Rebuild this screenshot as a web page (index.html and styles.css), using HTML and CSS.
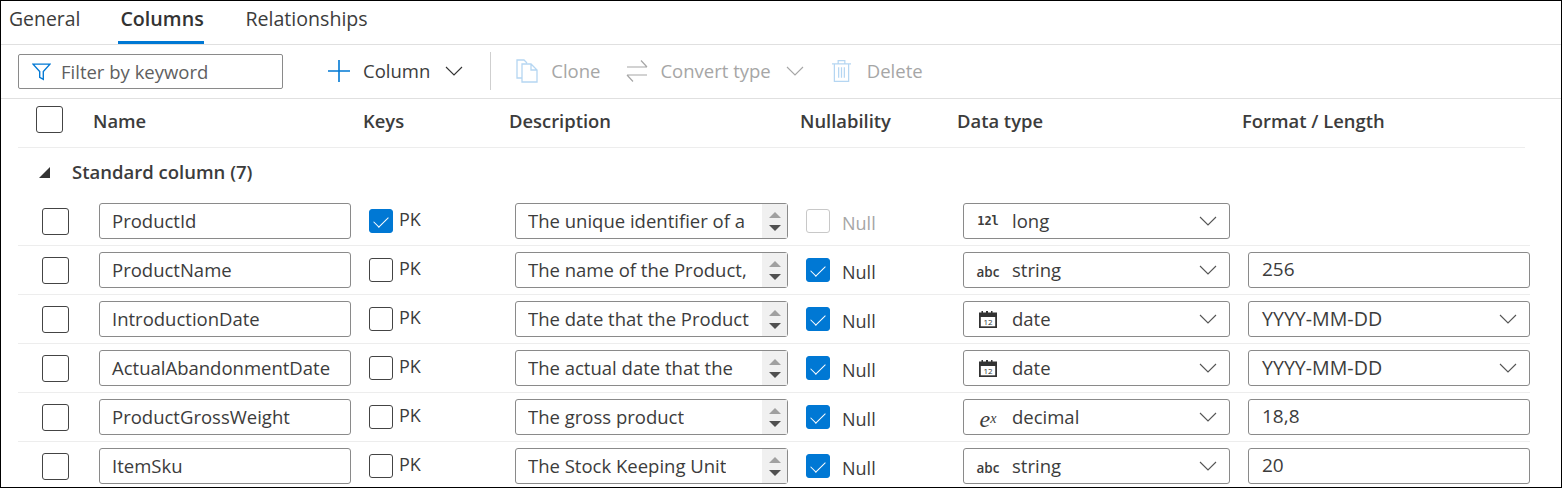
FILE: index.html
```html
<!DOCTYPE html>
<html lang="en">
<head>
    <meta charset="UTF-8">
    <title>Columns</title>
    <link rel="stylesheet" href="styles.css">
</head>
<body>
    <div class="frame">
        <nav class="tabs">
            <a class="tab">General</a>
            <a class="tab tab-active">Columns</a>
            <a class="tab">Relationships</a>
        </nav>

        <div class="toolbar">
            <div class="filter">
                <svg class="filter-icon" viewBox="0 0 18 18"><path d="M1 2h16l-6.300 7v7.500l-3.400-2V9z" fill="none" stroke="#0078d4" stroke-width="1.300"/></svg>
                <span>Filter by keyword</span>
            </div>
            <button class="tool tool-column">
                <svg class="plus-icon" viewBox="0 0 24 24"><path d="M12 1v22M1 12h22" stroke="#0078d4" stroke-width="1.600"/></svg>
                <span>Column</span>
                <svg class="chev chev-dark" viewBox="0 0 18 10"><path d="M1 1l8 8 8-8"/></svg>
            </button>
            <div class="divider"></div>
            <button class="tool tool-off tool-clone">
                <svg class="clone-icon" viewBox="0 0 22 24"><path d="M6 19H1V1h7l3 3M6 5h9l6 6v12H6zM15 5v6h6" fill="#fff" stroke="#b5d6f2" stroke-width="1.300"/></svg>
                <span>Clone</span>
            </button>
            <button class="tool tool-off tool-convert">
                <svg class="convert-icon" viewBox="0 0 22 24"><path d="M1 8h20M15 1.500L21 8M1 16h20M7 22.500L1 16" fill="none" stroke="#a6a6a6" stroke-width="1.200"/></svg>
                <span>Convert type</span>
                <svg class="chev chev-off" viewBox="0 0 18 10"><path d="M1 1l8 8 8-8"/></svg>
            </button>
            <button class="tool tool-off tool-delete">
                <svg class="trash-icon" viewBox="0 0 20 24"><path d="M0 4.500h20M6.500 4.500V1.200h7v3.300M2.500 4.500V23h15V4.500M7 8v11M10 8v11M13 8v11" fill="none" stroke="#b5d6f2" stroke-width="1.300"/></svg>
                <span>Delete</span>
            </button>
        </div>

        <div class="head grid">
            <div><span class="check head-check"></span></div>
            <div>Name</div>
            <div>Keys</div>
            <div>Description</div>
            <div>Nullability</div>
            <div>Data type</div>
            <div>Format / Length</div>
        </div>

        <div class="group"><span class="caret"></span>Standard column (7)</div>

        <div class="row grid">
            <div><span class="check"></span></div>
            <div class="field name">ProductId</div>
            <div class="key"><span class="check small on"></span><span class="key-label">PK</span></div>
            <div class="field desc"><span class="clip">The unique identifier of a</span><span class="spin"><i class="up"></i><i class="down"></i></span></div>
            <div class="null off"><span class="check small"></span><span class="null-label">Null</span></div>
            <div class="field type"><span class="glyph glyph-num">12l</span>long<svg class="chev" viewBox="0 0 18 10"><path d="M1 1l8 8 8-8"/></svg></div>
            <div></div>
        </div>
        <div class="row grid">
            <div><span class="check"></span></div>
            <div class="field name">ProductName</div>
            <div class="key"><span class="check small"></span><span class="key-label">PK</span></div>
            <div class="field desc"><span class="clip">The name of the Product,</span><span class="spin"><i class="up"></i><i class="down"></i></span></div>
            <div class="null"><span class="check small on"></span><span class="null-label">Null</span></div>
            <div class="field type"><span class="glyph glyph-abc">abc</span>string<svg class="chev" viewBox="0 0 18 10"><path d="M1 1l8 8 8-8"/></svg></div>
            <div class="field format">256</div>
        </div>
        <div class="row grid">
            <div><span class="check"></span></div>
            <div class="field name">IntroductionDate</div>
            <div class="key"><span class="check small"></span><span class="key-label">PK</span></div>
            <div class="field desc"><span class="clip">The date that the Product</span><span class="spin"><i class="up"></i><i class="down"></i></span></div>
            <div class="null"><span class="check small on"></span><span class="null-label">Null</span></div>
            <div class="field type"><span class="glyph"><svg class="cal" viewBox="0 0 18 18"><path d="M0 2.500h2.500V1h1.500v1.500h3V1h2v1.500h3V1h1.500v1.500H18V18H0z"/><rect x="1.800" y="7" width="14.400" height="9.300" fill="#fff"/><text x="9" y="15" class="cal-day">12</text></svg></span>date<svg class="chev" viewBox="0 0 18 10"><path d="M1 1l8 8 8-8"/></svg></div>
            <div class="field format format-date">YYYY-MM-DD<svg class="chev" viewBox="0 0 18 10"><path d="M1 1l8 8 8-8"/></svg></div>
        </div>
        <div class="row grid">
            <div><span class="check"></span></div>
            <div class="field name">ActualAbandonmentDate</div>
            <div class="key"><span class="check small"></span><span class="key-label">PK</span></div>
            <div class="field desc"><span class="clip">The actual date that the</span><span class="spin"><i class="up"></i><i class="down"></i></span></div>
            <div class="null"><span class="check small on"></span><span class="null-label">Null</span></div>
            <div class="field type"><span class="glyph"><svg class="cal" viewBox="0 0 18 18"><path d="M0 2.500h2.500V1h1.500v1.500h3V1h2v1.500h3V1h1.500v1.500H18V18H0z"/><rect x="1.800" y="7" width="14.400" height="9.300" fill="#fff"/><text x="9" y="15" class="cal-day">12</text></svg></span>date<svg class="chev" viewBox="0 0 18 10"><path d="M1 1l8 8 8-8"/></svg></div>
            <div class="field format format-date">YYYY-MM-DD<svg class="chev" viewBox="0 0 18 10"><path d="M1 1l8 8 8-8"/></svg></div>
        </div>
        <div class="row grid">
            <div><span class="check"></span></div>
            <div class="field name">ProductGrossWeight</div>
            <div class="key"><span class="check small"></span><span class="key-label">PK</span></div>
            <div class="field desc"><span class="clip">The gross product</span><span class="spin"><i class="up"></i><i class="down"></i></span></div>
            <div class="null"><span class="check small on"></span><span class="null-label">Null</span></div>
            <div class="field type"><span class="glyph glyph-exp">e<sup>x</sup></span>decimal<svg class="chev" viewBox="0 0 18 10"><path d="M1 1l8 8 8-8"/></svg></div>
            <div class="field format">18,8</div>
        </div>
        <div class="row grid">
            <div><span class="check"></span></div>
            <div class="field name">ItemSku</div>
            <div class="key"><span class="check small"></span><span class="key-label">PK</span></div>
            <div class="field desc"><span class="clip">The Stock Keeping Unit</span><span class="spin"><i class="up"></i><i class="down"></i></span></div>
            <div class="null"><span class="check small on"></span><span class="null-label">Null</span></div>
            <div class="field type"><span class="glyph glyph-abc">abc</span>string<svg class="chev" viewBox="0 0 18 10"><path d="M1 1l8 8 8-8"/></svg></div>
            <div class="field format">20</div>
        </div>
    </div>
</body>
</html>
```

FILE: styles.css
```css
* {
    box-sizing: border-box;
}
body {
    margin: 0;
    font-family: "Open Sans", "Noto Sans", sans-serif;
    font-size: 18.5px;
    color: #3c3c3c;
    background: #fff;
}
.frame {
    width: 1562px;
    height: 488px;
    border: 1px solid #000;
    overflow: hidden;
}

/* tabs */
.tabs {
    display: flex;
    height: 44px;
    border-bottom: 1px solid #e0e0e0;
    padding-left: 8px;
    font-size: 19.400px;
}
.tab {
    line-height: 36px;
    height: 43px;
}
.tab:last-child {
    font-size: 19.600px;
    margin-left: 41px;
}
.tab-active {
    font-size: 19.700px;
    font-weight: 600;
    color: #333;
    border-bottom: 3px solid #0078d4;
    padding: 0 2px;
    width: 86px;
    margin-left: 38px;
}

/* toolbar */
.toolbar {
    display: flex;
    align-items: center;
    height: 54px;
    border-bottom: 1px solid #e0e0e0;
    padding-left: 17px;
}
.filter {
    display: flex;
    align-items: center;
    width: 265px;
    height: 35px;
    border: 1px solid #8a8a8a;
    border-radius: 2px;
    padding-left: 13px;
    color: #5f5f5f;
}
.filter-icon {
    width: 19px;
    height: 19px;
    margin-right: 10px;
}
.tool {
    display: flex;
    align-items: center;
    background: none;
    border: none;
    padding: 0 0 2px;
    font: inherit;
    color: #3c3c3c;
}
.tool-off {
    color: #a6a6a6;
}
.tool-column {
    margin-left: 44px;
}
.plus-icon {
    width: 24px;
    height: 24px;
    margin-right: 12px;
}
.divider {
    width: 1px;
    height: 38px;
    background: #cfcfcf;
    margin: 0 0 2px 27px;
}
.tool-clone {
    margin-left: 25px;
}
.clone-icon {
    width: 22px;
    height: 24px;
    margin-right: 13px;
}
.tool-convert {
    margin-left: 26px;
}
.convert-icon {
    width: 22px;
    height: 24px;
    margin-right: 12px;
}
.tool-delete {
    margin-left: 28px;
}
.trash-icon {
    width: 19px;
    height: 24px;
    margin-right: 16px;
}
.chev {
    width: 18px;
    height: 10px;
    color: #555;
    fill: none;
    stroke: currentColor;
    stroke-width: 1.100;
}
.tool .chev {
    margin-left: 15px;
}
.chev-off {
    color: #a6a6a6;
}
.chev-dark {
    color: #333;
}

/* table */
.grid {
    display: grid;
    align-items: center;
}
.head {
    grid-template-columns: 75px 270px 146px 291px 157px 285px 1fr;
    height: 49px;
    margin: 0 36px 0 17px;
    padding-bottom: 6px;
    border-bottom: 1px solid #ededed;
    font-weight: 600;
    font-size: 18.400px;
}
.head-check {
    margin: -1px 0 0 18px;
}
.group {
    display: flex;
    align-items: center;
    height: 49px;
    padding: 0 0 2px 38px;
    font-size: 18.500px;
    font-weight: 600;
}
.caret {
    width: 0;
    height: 0;
    border-left: 11px solid transparent;
    border-bottom: 11px solid #333;
    margin: 1px 22px 0 0;
}
.row {
    grid-template-columns: 81px 270px 146px 291px 157px 285px 282px;
    height: 49px;
    margin-left: 17px;
    width: 1512px;
    padding: 6px 0;
    border-bottom: 1px solid #ededed;
}
.check {
    display: block;
    width: 27px;
    height: 27px;
    border: 1px solid #444;
    border-radius: 3px;
    background: #fff;
}
.row > div:first-child .check {
    margin-left: 24px;
}
.check.small {
    width: 24px;
    height: 24px;
    position: relative;
}
.check.on {
    background: #0078d4;
    border-color: #0078d4;
}
.check.on::after {
    content: "";
    position: absolute;
    left: 7px;
    top: 3px;
    width: 7px;
    height: 13px;
    border: solid #fff;
    border-width: 0 1.500px 1.500px 0;
    transform: rotate(45deg);
}
.field {
    display: flex;
    align-items: center;
    height: 36px;
    border: 1px solid #8a8a8a;
    border-radius: 3px;
    padding: 0 0 2px 12px;
    background: #fff;
}
.name {
    width: 252px;
}
.desc {
    width: 273px;
    justify-content: space-between;
}
.clip {
    white-space: nowrap;
    overflow: hidden;
}
.spin {
    display: flex;
    flex-direction: column;
    align-items: center;
    justify-content: center;
    gap: 7px;
    flex: none;
    width: 25px;
    height: 34px;
    margin-bottom: -2px;
    background: #f0f0f0;
}
.spin i {
    width: 0;
    height: 0;
    border-left: 6px solid transparent;
    border-right: 6px solid transparent;
}
.spin .up {
    border-bottom: 6px solid #a0a0a0;
}
.spin .down {
    border-top: 6px solid #505050;
}
.key,
.null {
    display: flex;
    align-items: center;
    height: 36px;
    font-size: 18px;
}
.key {
    gap: 6px;
}
.key-label {
    margin-bottom: 5px;
}
.null {
    gap: 12px;
}
.null-label {
    margin-top: 3px;
}
.null.off {
    color: #a6a6a6;
}
.null.off .check {
    border-color: #c8c8c8;
}
.type {
    width: 267px;
    padding-left: 0;
}
.glyph {
    display: flex;
    align-items: center;
    justify-content: center;
    width: 48px;
    height: 20px;
    flex: none;
    margin-top: 2px;
}
.glyph-num,
.glyph-abc {
    font-weight: 600;
}
.glyph-num {
    font-family: "DejaVu Sans Mono", monospace;
    font-size: 12px;
}
.glyph-abc {
    font-size: 13.500px;
    padding-top: 4px;
}
.glyph-exp {
    font-family: "Liberation Serif", serif;
    font-style: italic;
    font-size: 24px;
    padding-top: 4px;
}
.glyph-exp sup {
    font-size: 14px;
    line-height: 0;
    vertical-align: 8px;
}
.cal {
    width: 18px;
    height: 18px;
    fill: #333;
}
.cal-day {
    font-size: 8px;
    font-family: "Open Sans", sans-serif;
    text-anchor: middle;
}
.field .chev {
    margin: 2px 12px 0 auto;
}
.format {
    width: 282px;
    font-size: 19px;
    padding-left: 13px;
}
.format-date {
    font-size: 19.600px;
}
```
